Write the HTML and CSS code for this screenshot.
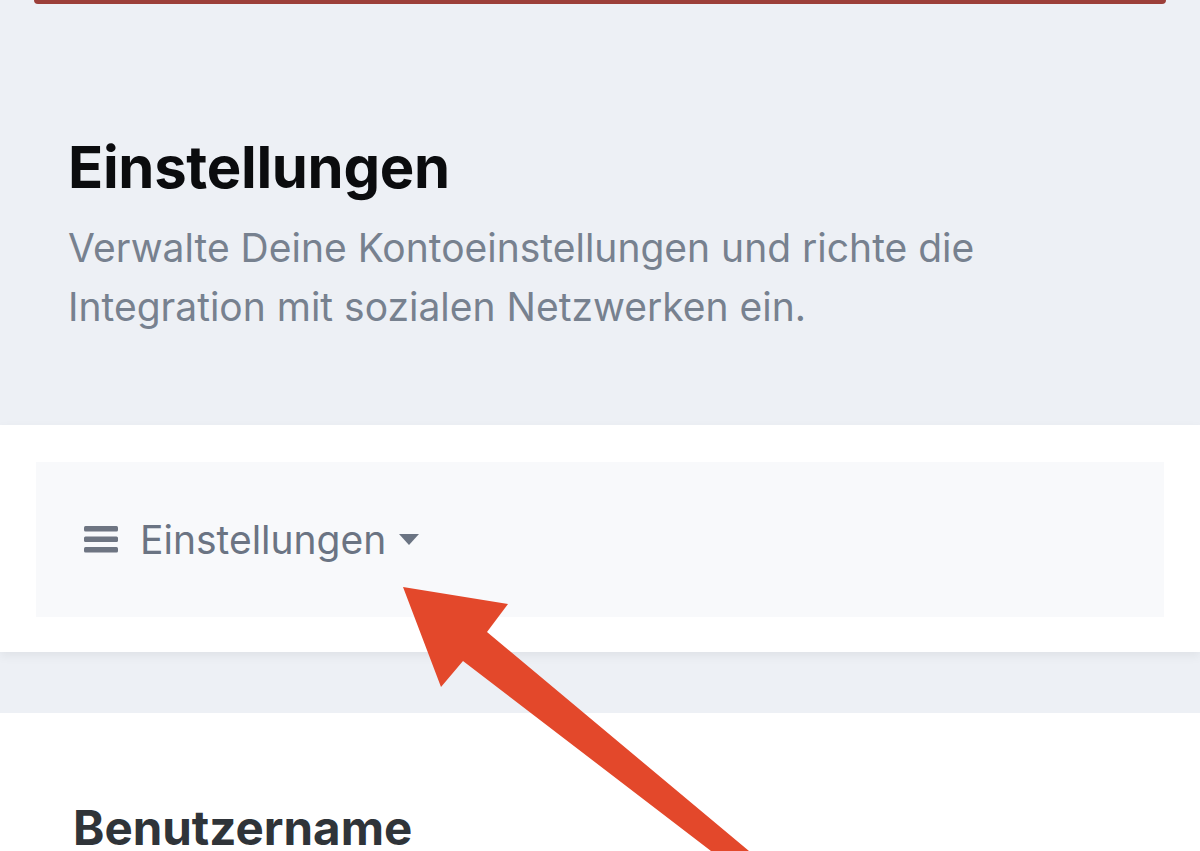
FILE: index.html
```html
<!DOCTYPE html>
<html lang="de">
<head>
    <meta charset="UTF-8">
    <title>Einstellungen</title>
    <link rel="stylesheet" href="styles.css">
</head>
<body>
    <div class="alert-edge"></div>

    <div class="page-header">
        <h1>Einstellungen</h1>
        <p>Verwalte Deine Kontoeinstellungen und richte die Integration mit sozialen Netzwerken ein.</p>
    </div>

    <div class="nav-panel">
        <div class="nav-box">
            <svg class="menu-icon" width="34" height="28" viewBox="0 0 34 28">
                <rect x="0" y="0" width="34" height="5.5" rx="1.5"/>
                <rect x="0" y="10.5" width="34" height="5.5" rx="1.5"/>
                <rect x="0" y="21" width="34" height="5.5" rx="1.5"/>
            </svg>
            <span class="nav-label">Einstellungen</span>
            <svg class="caret" width="20" height="11" viewBox="0 0 20 11">
                <path d="M0 0 H20 L10 11 Z"/>
            </svg>
        </div>
    </div>

    <div class="spacer"></div>

    <div class="section">
        <h2>Benutzername</h2>
    </div>

    <!-- Markierungspfeil über dem Screenshot -->
    <svg class="arrow" width="1200" height="851" viewBox="0 0 1200 851">
        <polygon points="403,587 508,604 487,632 749,851 711,851 463,661 441,687"/>
    </svg>
</body>
</html>
```

FILE: styles.css
```css
body {
    margin: 0;
    background-color: #edf0f5;
    font-family: Inter, "Noto Sans", sans-serif;
    overflow: hidden;
}

.alert-edge {
    height: 4px;
    margin: 0 34px;
    background-color: #9c3f39;
    border-radius: 0 0 6px 6px;
}

.page-header {
    padding: 127px 68px 0;
    height: 294px;
}

.page-header h1 {
    margin: 0;
    font-size: 58px;
    line-height: 72px;
    font-weight: 700;
    color: #0b0c0e;
    letter-spacing: -0.3px;
}

.page-header p {
    margin: 15px 0 0;
    font-size: 39px;
    line-height: 59px;
    color: #77818f;
    max-width: 960px;
}

.nav-panel {
    background-color: white;
    padding: 37px 36px 35px;
    box-shadow: 0 4px 10px rgba(0, 0, 0, 0.06);
    position: relative;
}

.nav-box {
    background-color: #f8f9fb;
    height: 155px;
    padding-left: 48px;
    display: flex;
    align-items: center;
}

.menu-icon {
    fill: #6e7582;
    margin-right: 22px;
}

.nav-label {
    font-size: 39px;
    color: #6b7483;
    margin-right: 13px;
}

.caret {
    fill: #6b7483;
}

.spacer {
    height: 61px;
}

.section {
    background-color: white;
    padding: 87px 73px 0;
    height: 300px;
}

.section h2 {
    margin: 0;
    font-size: 47.5px;
    line-height: 56px;
    font-weight: 700;
    color: #2f3439;
}

.arrow {
    position: absolute;
    top: 0;
    left: 0;
    fill: #e3482b;
}
```
